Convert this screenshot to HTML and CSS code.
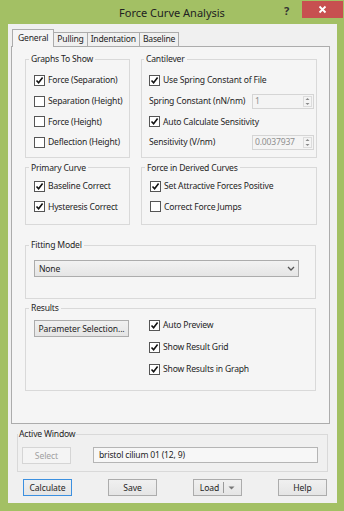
FILE: index.html
```html
<!DOCTYPE html>
<html lang="en">
<head>
    <meta charset="UTF-8">
    <title>Force Curve Analysis</title>
    <link rel="stylesheet" href="styles.css">
</head>
<body>

<div class="window">
    <div class="titlebar">
        <div class="title">Force Curve Analysis</div>
        <div class="help-q">?</div>
        <div class="close">
            <svg width="9" height="9" viewBox="0 0 9 9"><path d="M1.5 1.5 L7.5 7.5 M7.5 1.5 L1.5 7.5" stroke="#fff" stroke-width="1.8" fill="none"/></svg>
        </div>
    </div>

    <div class="client">
        <div class="tabs">
            <div class="tab active">General</div>
            <div class="tab">Pulling</div>
            <div class="tab">Indentation</div>
            <div class="tab">Baseline</div>
        </div>

        <div class="panel">
            <div class="row row-top">
                <fieldset class="group graphs">
                    <legend>Graphs To Show</legend>
                    <div class="check"><span class="box"><svg viewBox="0 0 9 9"><path d="M1.5 4.5 L3.6 6.8 L7.6 1.6" /></svg></span>Force (Separation)</div>
                    <div class="check"><span class="box"></span>Separation (Height)</div>
                    <div class="check"><span class="box"></span>Force (Height)</div>
                    <div class="check"><span class="box"></span>Deflection (Height)</div>
                </fieldset>

                <fieldset class="group cantilever">
                    <legend>Cantilever</legend>
                    <div class="check"><span class="box"><svg viewBox="0 0 9 9"><path d="M1.5 4.5 L3.6 6.8 L7.6 1.6" /></svg></span>Use Spring Constant of File</div>
                    <div class="field-row">
                        <span>Spring Constant (nN/nm)</span>
                        <div class="spin">
                            <span class="spin-value">1</span>
                            <span class="spin-btn">
                                <svg width="5" height="9" viewBox="0 0 5 9"><path d="M0.5 3 L2.5 1 L4.5 3 Z M0.5 6 L2.5 8 L4.5 6 Z" fill="#8a8a8a"/></svg>
                            </span>
                        </div>
                    </div>
                    <div class="check"><span class="box"><svg viewBox="0 0 9 9"><path d="M1.5 4.5 L3.6 6.8 L7.6 1.6" /></svg></span>Auto Calculate Sensitivity</div>
                    <div class="field-row">
                        <span>Sensitivity (V/nm)</span>
                        <div class="spin">
                            <span class="spin-value">0.0037937</span>
                            <span class="spin-btn">
                                <svg width="5" height="9" viewBox="0 0 5 9"><path d="M0.5 3 L2.5 1 L4.5 3 Z M0.5 6 L2.5 8 L4.5 6 Z" fill="#8a8a8a"/></svg>
                            </span>
                        </div>
                    </div>
                </fieldset>
            </div>

            <div class="row row-mid">
                <fieldset class="group primary">
                    <legend>Primary Curve</legend>
                    <div class="check"><span class="box"><svg viewBox="0 0 9 9"><path d="M1.5 4.5 L3.6 6.8 L7.6 1.6" /></svg></span>Baseline Correct</div>
                    <div class="check"><span class="box"><svg viewBox="0 0 9 9"><path d="M1.5 4.5 L3.6 6.8 L7.6 1.6" /></svg></span>Hysteresis Correct</div>
                </fieldset>

                <fieldset class="group derived">
                    <legend>Force in Derived Curves</legend>
                    <div class="check"><span class="box"><svg viewBox="0 0 9 9"><path d="M1.5 4.5 L3.6 6.8 L7.6 1.6" /></svg></span>Set Attractive Forces Positive</div>
                    <div class="check"><span class="box"></span>Correct Force Jumps</div>
                </fieldset>
            </div>

            <fieldset class="group fitting">
                <legend>Fitting Model</legend>
                <div class="combo">
                    <span>None</span>
                    <svg width="8" height="5" viewBox="0 0 8 5"><path d="M1 1 L4 4 L7 1" stroke="#555" stroke-width="1.3" fill="none"/></svg>
                </div>
            </fieldset>

            <fieldset class="group results">
                <legend>Results</legend>
                <div class="results-body">
                    <div class="results-left">
                        <button class="btn param-btn">Parameter Selection...</button>
                    </div>
                    <div class="results-right">
                        <div class="check tall"><span class="box"><svg viewBox="0 0 9 9"><path d="M1.5 4.5 L3.6 6.8 L7.6 1.6" /></svg></span>Auto Preview</div>
                        <div class="check tall"><span class="box"><svg viewBox="0 0 9 9"><path d="M1.5 4.5 L3.6 6.8 L7.6 1.6" /></svg></span>Show Result Grid</div>
                        <div class="check tall"><span class="box"><svg viewBox="0 0 9 9"><path d="M1.5 4.5 L3.6 6.8 L7.6 1.6" /></svg></span>Show Results in Graph</div>
                    </div>
                </div>
            </fieldset>
        </div>

        <fieldset class="group active-window">
            <legend>Active Window</legend>
            <div class="aw-body">
                <button class="btn disabled">Select</button>
                <div class="textfield">bristol cilium 01 (12, 9)</div>
            </div>
        </fieldset>

        <div class="buttons">
            <button class="btn default">Calculate</button>
            <button class="btn">Save</button>
            <button class="btn split">Load<span class="sep"></span><svg width="7" height="4" viewBox="0 0 7 4"><path d="M0.5 0.5 L6.5 0.5 L3.5 3.5 Z" fill="#777"/></svg></button>
            <button class="btn">Help</button>
        </div>
    </div>
</div>

</body>
</html>
```

FILE: styles.css
```css
body {
    margin: 0;
    font-family: "Noto Sans", "Open Sans", sans-serif;
    font-size: 8.6px;
    letter-spacing: -0.2px;
    color: #1e1e1e;
}

.window {
    width: 344px;
    height: 511px;
    background: #a3c064;
    display: flex;
    flex-direction: column;
}

.titlebar {
    height: 24px;
    display: flex;
    align-items: flex-start;
    flex: none;
}

.title {
    flex: 1;
    text-align: center;
    padding-left: 60px;
    font-size: 11px;
    letter-spacing: 0;
    line-height: 26px;
    color: #222;
}

.help-q {
    width: 12px;
    margin-top: 5px;
    font-size: 11px;
    font-weight: bold;
    line-height: 12px;
    color: #333;
}

.close {
    width: 41px;
    height: 17px;
    margin: 1px 1px 0 6px;
    background: #c75050;
    display: flex;
    align-items: center;
    justify-content: center;
}

.client {
    flex: 1;
    margin: 0 7px 8px 8px;
    background: #f0f0f0;
    display: flex;
    flex-direction: column;
}

/* tabs */
.tabs {
    height: 22px;
    display: flex;
    align-items: flex-end;
    padding-left: 4px;
    position: relative;
    z-index: 1;
}

.tab {
    height: 13px;
    line-height: 13px;
    padding: 0 3px;
    border: 1px solid #acacac;
    border-bottom: none;
    margin-right: -1px;
    background: #f0f0f0;
}

.tab.active {
    height: 17px;
    line-height: 16px;
    background: #f5f5f5;
    margin-bottom: -1px;
    padding: 0 5px;
}

.panel {
    height: 378px;
    box-sizing: border-box;
    margin: 0 7px 0 3px;
    border: 1px solid #acacac;
    background: #f5f5f5;
    padding: 6px 13px 0 13px;
}

/* group boxes */
.group {
    margin: 0;
    min-width: 0;
    border: 1px solid #d9d9d9;
    padding: 5px 4px 4px 8px;
}

.group legend {
    padding: 0 2px;
    margin-left: -5px;
    line-height: 12px;
}

.row {
    display: grid;
    grid-template-columns: 105px 176px;
    column-gap: 11px;
}

.cantilever {
    padding: 5px 2px 4px 7px;
}

.row-mid {
    margin-top: 4px;
}

.row-mid .group {
    padding-top: 2px;
    padding-bottom: 7px;
}

.check {
    height: 20.7px;
    display: flex;
    align-items: center;
    gap: 3px;
    white-space: nowrap;
}

.check.tall {
    height: 22px;
}

.box {
    width: 11px;
    height: 11px;
    box-sizing: border-box;
    border: 1px solid #555;
    background: #fff;
    flex: none;
    display: flex;
}

.box svg {
    width: 9px;
    height: 9px;
}

.box path {
    stroke: #111;
    stroke-width: 1.6;
    fill: none;
}

.field-row {
    height: 20.7px;
    display: flex;
    align-items: center;
    justify-content: space-between;
    white-space: nowrap;
}

.spin {
    width: 62px;
    height: 15px;
    box-sizing: border-box;
    border: 1px solid #d5d5d5;
    background: #f4f4f4;
    display: flex;
    align-items: center;
    justify-content: space-between;
}

.spin-value {
    padding-left: 2px;
    color: #8f8f8f;
}

.spin-btn {
    width: 9px;
    height: 11px;
    margin-right: 1px;
    border: 1px solid #dcdcdc;
    box-sizing: border-box;
    display: flex;
    align-items: center;
    justify-content: center;
}

.fitting {
    margin-top: 14px;
    padding: 9px 16px 21px 8px;
}

.combo {
    height: 17px;
    box-sizing: border-box;
    border: 1px solid #acacac;
    background: linear-gradient(#f2f2f2, #e5e5e5);
    display: flex;
    align-items: center;
    justify-content: space-between;
    padding: 0 3px 0 4px;
}

.results {
    margin-top: 3px;
    padding: 0 4px 10px 8px;
}

.results-body {
    display: flex;
}

.results-left {
    width: 115px;
    padding-top: 6px;
}

.btn {
    font-family: inherit;
    font-size: 8.6px;
    letter-spacing: -0.1px;
    color: #1e1e1e;
    height: 17px;
    padding: 0;
    box-sizing: border-box;
    border: 1px solid #acacac;
    background: linear-gradient(#f0f0f0, #e5e5e5);
}

.param-btn {
    width: 95px;
}

.btn.disabled {
    width: 49px;
    color: #a0a0a0;
    border-color: #d5d5d5;
    background: #f4f4f4;
}

.btn.default {
    border-color: #3c90e0;
}

/* bottom of dialog */
.active-window {
    margin: 4px 9px 0 9px;
    padding: 7px 9px 7px 4px;
}

.active-window legend {
    margin-left: -4px;
    padding: 0 1px;
}

.aw-body {
    display: flex;
    align-items: flex-start;
}

.textfield {
    margin-left: 22px;
    flex: 1;
    height: 16px;
    line-height: 14px;
    box-sizing: border-box;
    border: 1px solid #b5b5b5;
    background: #f7f7f7;
    padding-left: 5px;
}

.buttons {
    display: flex;
    gap: 36px;
    margin-top: 7px;
    padding-left: 15px;
}

.buttons .btn {
    width: 49px;
}

.btn.split {
    display: flex;
    align-items: center;
    justify-content: center;
    gap: 4px;
}

.sep {
    width: 1px;
    height: 11px;
    background: #9a9a9a;
}
```
